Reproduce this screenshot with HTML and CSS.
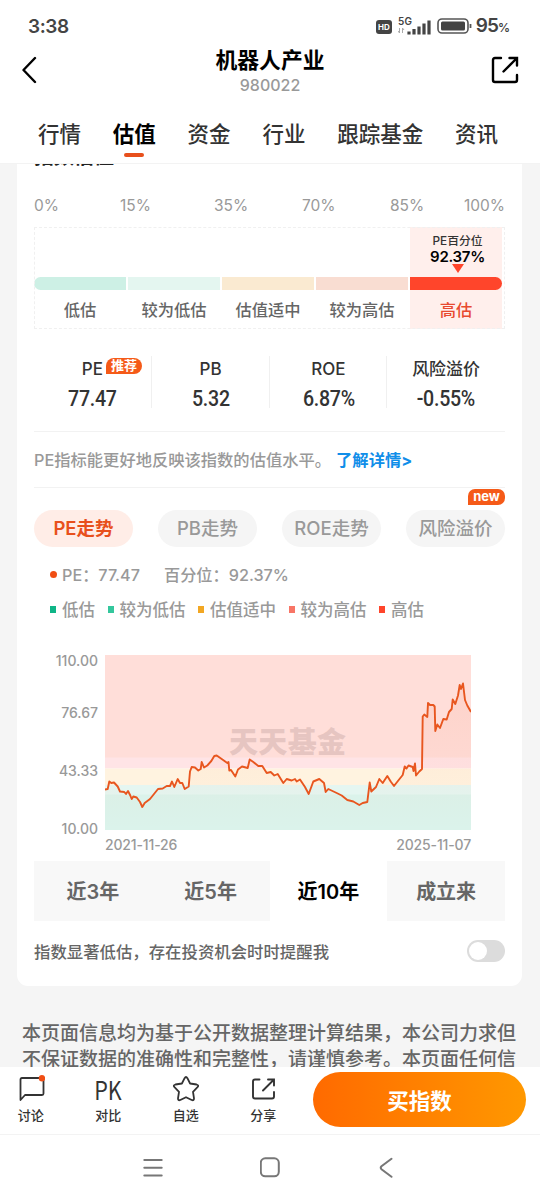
FILE: index.html
```
<!DOCTYPE html>
<html lang="zh-CN">
<head>
  <meta charset="UTF-8" />
  <meta name="viewport" content="width=device-width, initial-scale=1.0"/>
  <title>机器人产业 980022</title>
  <link rel="stylesheet" href="styles.css">
</head>
<body>
  <div class="status-bar">
    <span class="time">3:38</span>
    <div class="status-icons">
      <span class="hd">HD</span>
      <svg class="signal" width="34" height="20" viewBox="0 0 34 20">
        <text x="0" y="8" font-size="10" font-weight="600" textLength="14">5G</text>
        <path d="M1.500 16V11M0 14l1.500 2M4.500 11v5M4.500 11l1.500 2" stroke="#aaa" fill="none"/>
        <path d="M11 17.500v-3M16 17.500v-5.500M21 17.500v-8M26 17.500v-11M31 17.500v-14" stroke="#444" stroke-width="3.200" fill="none"/>
      </svg>
      <svg class="battery" width="36" height="17" viewBox="0 0 36 17">
        <rect x="1" y="1" width="30" height="14" rx="4" fill="none" stroke="#555" stroke-width="1.600"/>
        <rect x="4" y="3.500" width="24" height="9" rx="1.500" fill="#444"/>
        <path d="M33.500 6v4" stroke="#555" stroke-width="1.800"/>
      </svg>
      <span class="percent">95<small>%</small></span>
    </div>
  </div>

  <div class="header">
    <svg class="back" width="16" height="28" viewBox="0 0 16 28"><path d="M13 2L1.500 14 13 26" fill="none" stroke="#000" stroke-width="2.400" stroke-linecap="round" stroke-linejoin="round"/></svg>
    <div class="header-title">
      <h1>机器人产业</h1>
      <p>980022</p>
    </div>
    <svg class="share" width="28" height="28" viewBox="0 0 28 28"><path d="M10 2H4Q2 2 2 4v20q0 2 2 2h20q2 0 2-2v-5M12.500 15.500L25 3M18.500 2H26v7.500" fill="none" stroke="#000" stroke-width="2.400" stroke-linecap="round"/></svg>
  </div>

  <div class="tabs">
    <a>行情</a>
    <a class="active">估值</a>
    <a>资金</a>
    <a>行业</a>
    <a>跟踪基金</a>
    <a>资讯</a>
  </div>

  <div class="content">
    <div class="card">
      <h2>指数估值</h2>

      <div class="scale-labels">
        <span>0%</span><span>15%</span><span>35%</span><span>70%</span><span>85%</span><span>100%</span>
      </div>
      <div class="scale">
        <div class="level l1"><i></i><span>低估</span></div>
        <div class="level l2"><i></i><span>较为低估</span></div>
        <div class="level l3"><i></i><span>估值适中</span></div>
        <div class="level l4"><i></i><span>较为高估</span></div>
        <div class="level l5">
          <div class="mark"><small>PE百分位</small><b>92.37%</b></div>
          <i></i><span>高估</span>
        </div>
      </div>

      <div class="metrics">
        <div><p>PE<em class="tag">推荐</em></p><strong>77.47</strong></div>
        <div><p>PB</p><strong>5.32</strong></div>
        <div><p>ROE</p><strong>6.87%</strong></div>
        <div><p>风险溢价</p><strong>-0.55%</strong></div>
      </div>

      <div class="tip"><span>PE指标能更好地反映该指数的估值水平。</span><a>了解详情&gt;</a></div>

      <div class="pills">
        <button class="active">PE走势</button>
        <button>PB走势</button>
        <button>ROE走势</button>
        <button>风险溢价<em class="new">new</em></button>
      </div>

      <div class="reading"><i></i><span class="pe">PE：77.47</span><span class="pct">百分位：92.37%</span></div>
      <div class="legend">
        <span class="g1">低估</span><span class="g2">较为低估</span><span class="g3">估值适中</span><span class="g4">较为高估</span><span class="g5">高估</span>
      </div>

      <div class="chart">
        <div class="y-axis"><span>110.00</span><span>76.67</span><span>43.33</span><span>10.00</span></div>
        <svg width="366" height="175" viewBox="0 0 366 175">
          <defs>
            <linearGradient id="fade" x1="0" y1="0" x2="0" y2="1">
              <stop offset="0" stop-color="#e8501c" stop-opacity=".08"/>
              <stop offset="1" stop-color="#e8501c" stop-opacity="0"/>
            </linearGradient>
          </defs>
          <rect width="366" height="103" fill="#ffded9"/>
          <rect y="102.500" width="366" height="11" fill="#ffe4e6"/>
          <rect y="113.500" width="366" height="17" fill="#fff3e0"/>
          <rect y="130" width="366" height="10" fill="#e5f6f1"/>
          <rect y="139.500" width="366" height="35.500" fill="#dbf3eb"/>
          <text class="watermark" x="124" y="98" textLength="117">天天基金</text>
          <path id="area" fill="url(#fade)"/>
          <path id="line" fill="none" stroke="#e8561f" stroke-width="1.900" stroke-linejoin="round"/>
        </svg>
        <div class="x-axis"><span>2021-11-26</span><span>2025-11-07</span></div>
      </div>

      <div class="ranges">
        <button>近3年</button>
        <button>近5年</button>
        <button class="active">近10年</button>
        <button>成立来</button>
      </div>

      <div class="remind"><span>指数显著低估，存在投资机会时时提醒我</span><i class="switch"></i></div>
    </div>

    <p class="disclaimer">本页面信息均为基于公开数据整理计算结果，本公司力求但<br>不保证数据的准确性和完整性，请谨慎参考。本页面任何信</p>
  </div>

  <div class="footer">
    <div class="action">
      <svg width="28" height="28" viewBox="0 0 28 28"><path d="M3.500 25V4.500Q3.500 3 5 3h20q1.500 0 1.500 1.500v14q0 1.500-1.500 1.500H8z" fill="none" stroke="#333" stroke-width="1.800" stroke-linejoin="round"/><circle cx="25" cy="3.300" r="3.200" fill="#f04e14"/></svg>
      <span>讨论</span>
    </div>
    <div class="action">
      <b class="pk">PK</b>
      <span>对比</span>
    </div>
    <div class="action">
      <svg width="28" height="28" viewBox="0 0 28 28"><path d="M12.600 3.200q1.400-2.400 2.800 0l2.700 5.300 6.500 1q2.700.7.900 2.700l-4.500 4.600 1 6.500q.1 2.600-2.300 1.700L14 22.200 8.300 25q-2.400.9-2.300-1.700l1-6.500-4.500-4.600q-1.800-2 .9-2.700l6.500-1z" fill="none" stroke="#333" stroke-width="1.800" stroke-linejoin="round"/></svg>
      <span>自选</span>
    </div>
    <div class="action">
      <svg width="28" height="28" viewBox="0 0 28 28"><path d="M10.500 4.500H6Q4 4.500 4 6.500v15q0 2 2 2h17q2 0 2-2v-4.500M14 15.500L24.500 5M19 4.500h6v6" fill="none" stroke="#333" stroke-width="1.900" stroke-linecap="round"/></svg>
      <span>分享</span>
    </div>
    <button class="buy">买指数</button>
  </div>

  <div class="nav-bar">
    <svg width="20" height="20" viewBox="0 0 20 20"><path d="M1.300 2h17.400M1.300 9.800h17.400M1.300 17.500h17.400" stroke="#777" stroke-width="2" stroke-linecap="round"/></svg>
    <svg width="22" height="22" viewBox="0 0 22 22"><rect x=".8" y="1.300" width="18" height="18" rx="4.500" fill="none" stroke="#777" stroke-width="2"/></svg>
    <svg width="14" height="22" viewBox="0 0 14 22"><path d="M12.500 1.800L2.500 9.300q-1.500 1.500 0 3l10 7.500" fill="none" stroke="#777" stroke-width="2" stroke-linecap="round"/></svg>
  </div>

  <script>
    // PE curve, x/y inside the 366x175 plot
    const points = '0,134.500 2.700,134 4.300,126.500 6.300,128 9,127.500 12.700,131.500 15,136.500 19.300,137 21,139 23,136 25.300,140.500 26.700,144 28.300,141.500 31.700,142.500 35,147 37.300,152 39.700,148 45,144 49,139 53,134 57.700,133.500 61.700,131 65,131 67,126.500 69.300,132 72.700,124 75,128 77.300,128 79.700,134 83.700,131.500 85,116.500 86.700,112 90,112.500 93.300,115.500 95.700,114 96.700,107 99,112.500 102.300,110.500 106.300,106 109.300,101 111.700,100.500 116.700,104 122.300,108 123.500,107 124.300,115.500 126,115 130.300,121.500 133,114.500 137,111.500 142.700,113 144.700,104.500 148.300,107 153.300,111 157.300,111 161.700,118 165.700,117 169.300,120.500 172.700,119 178.300,128 181.700,124 186.700,125.500 190,124 191.700,126.500 195,124.500 200,132 203.700,139 208.300,126.500 214.300,124 219,128 220.700,137 223.300,134 231.700,138 236.700,140.500 242.300,145 248.300,146.500 254.300,150 257.700,148 262.300,147 264.700,127.500 266.300,136.500 271,132 274.300,124 277.700,128 282.300,121 285.700,126.500 289,131 293.300,125.500 297.700,120 299.700,111.500 301.500,113.500 303.500,110.500 307.700,112 308.500,116 310,108.500 311,120.500 314.300,116.500 317,114 317.700,61.500 319.300,59.500 322.300,62 323,48 325,50 328.300,50 329.700,51.500 330.300,76 332.300,69.500 335,73 338.300,64 341.700,64.500 344,57 346.700,54 347.700,44.500 350.300,49 353,40.500 354.700,30 356,34 358,28.500 360,45 362.300,50.500 366,57';
    document.getElementById('line').setAttribute('d', 'M' + points);
    document.getElementById('area').setAttribute('d', 'M' + points + ' V175 H0 Z');
  </script>
</body>
</html>
```
FILE: styles.css
```
* {
  box-sizing: border-box;
}
body {
  margin: 0;
  width: 540px;
  height: 1200px;
  overflow: hidden;
  display: flex;
  flex-direction: column;
  background: #fff;
  color: #333;
  font-family: Inter, "Noto Sans CJK SC", sans-serif;
  font-weight: 500;
}
h1, h2, p {
  margin: 0;
}
button {
  border: none;
  padding: 0;
  font-family: inherit;
}
em, i {
  font-style: normal;
}
svg {
  display: block;
  flex: none;
}
.status-bar {
  height: 46px;
  padding: 7px 30px 0 28px;
  display: flex;
  align-items: center;
  justify-content: space-between;
  color: #444;
}
.time {
  font-size: 19px;
  font-weight: 600;
  letter-spacing: -.4px;
}
.status-icons {
  display: flex;
  align-items: center;
}
.hd {
  width: 16px;
  height: 14px;
  border-radius: 3px;
  background: #444;
  color: #fff;
  font-size: 8px;
  font-weight: 700;
  line-height: 14px;
  text-align: center;
}
.signal {
  margin: 0 5px 0 6px;
  fill: #444;
}
.battery {
  margin-right: 3px;
}
.percent {
  font-size: 19px;
  font-weight: 600;
  line-height: 20px;
  letter-spacing: -1px;
}
.percent small {
  font-size: 12px;
  letter-spacing: 0;
}
.header {
  height: 56px;
  padding: 0 21px 0 22px;
  display: flex;
  justify-content: space-between;
}
.back {
  margin-top: 10px;
}
.share {
  margin-top: 10px;
}
.header-title {
  padding-left: 11px;
  text-align: center;
}
.header-title h1 {
  font-size: 21.8px;
  font-weight: 700;
  line-height: 28px;
  color: #000;
}
.header-title p {
  font-size: 16px;
  line-height: 22px;
  color: #999;
}
.tabs {
  height: 62px;
  padding: 17px 42px 0 38px;
  display: flex;
  justify-content: space-between;
  border-bottom: 1px solid #f3f3f3;
  font-size: 21.5px;
  line-height: 30px;
  white-space: nowrap;
}
.tabs .active {
  position: relative;
  color: #000;
  font-weight: 700;
}
.tabs .active::after {
  content: "";
  position: absolute;
  left: 11px;
  top: 34px;
  width: 20px;
  height: 4px;
  border-radius: 2px;
  background: #e8501c;
}
/* the page is scrolled a little, the card title sits mostly under the tabs */
.content {
  height: 903px;
  overflow: hidden;
  background: #f5f5f5;
}
.card {
  height: 842px;
  margin: -20px 18px 0 17px;
  padding: 0 17px;
  border-radius: 11px;
  background: #fff;
}
.card h2 {
  height: 26px;
  font-size: 20px;
  font-weight: 700;
  line-height: 26px;
  color: #222;
}
.scale-labels {
  height: 57px;
  padding-top: 25px;
  display: grid;
  grid-template-columns: 86px 94px 88px 88px 74px auto;
  font-size: 15.5px;
  font-weight: 400;
  line-height: 22px;
  color: #999;
}
.scale {
  height: 102px;
  padding-right: 3px;
  display: grid;
  grid-template-columns: repeat(5, 92px);
  justify-content: space-between;
  outline: 1px dashed #f0f0f0;
  outline-offset: -1px;
}
.level {
  display: flex;
  flex-direction: column;
  justify-content: flex-end;
  text-align: center;
  font-size: 16.3px;
  line-height: 40px;
  color: #666;
}
.level i {
  height: 13px;
}
.level span {
  height: 39px;
}
.l1 i {
  border-radius: 7px 0 0 7px;
  background: #cdf0e5;
}
.l2 i {
  background: #e4f6f0;
}
.l3 i {
  background: #faead1;
}
.l4 i {
  background: #f9ddd2;
}
.l5 {
  background: #ffefec;
  color: #e84a30;
}
.l5 i {
  border-radius: 0 7px 7px 0;
  background: #ff452b;
}
.mark {
  margin-bottom: 4px;
  padding-left: 3px;
  display: flex;
  flex-direction: column;
  align-items: center;
  color: #333;
}
.mark small {
  font-size: 11.8px;
  line-height: 15px;
}
.mark b {
  font-size: 15px;
  font-weight: 600;
  line-height: 15px;
  letter-spacing: -.3px;
  color: #000;
}
.mark::after {
  content: "";
  border: 6px solid transparent;
  border-top: 9px solid #ff452b;
  border-bottom: 0;
}
.metrics {
  height: 102px;
  padding-top: 27px;
  display: grid;
  grid-template-columns: repeat(4, 1fr);
  text-align: center;
}
.metrics div {
  height: 52px;
  margin-left: -1px;
  border-left: 1px solid #f0f0f0;
}
.metrics div:first-child {
  border-left: none;
}
.metrics p {
  position: relative;
  font-size: 17px;
  line-height: 27px;
}
.metrics strong {
  display: block;
  font-family: Roboto, sans-serif;
  font-size: 22px;
  font-weight: 500;
  line-height: 31px;
  letter-spacing: -.3px;
  transform: scaleX(.89);
}
.tag, .new {
  position: absolute;
  background: #f55a18;
  color: #fff;
  font-weight: 700;
  text-align: center;
}
.tag {
  left: 73px;
  top: 2px;
  width: 36px;
  height: 16px;
  border-radius: 8px 8px 8px 0;
  font-size: 13px;
  line-height: 15px;
}
.tip {
  height: 57px;
  padding-bottom: 2px;
  border: solid #f2f2f2;
  border-width: 1px 0;
  display: flex;
  align-items: center;
  font-size: 16.3px;
  color: #999;
  white-space: nowrap;
}
.tip a {
  margin-left: 5px;
  color: #108ee9;
  font-weight: 700;
}
.pills {
  padding-top: 22px;
  display: flex;
  justify-content: space-between;
}
.pills button {
  position: relative;
  width: 99px;
  height: 37px;
  border-radius: 19px;
  background: #f5f5f5;
  color: #999;
  font-size: 18.5px;
  font-weight: 500;
  line-height: 37px;
}
.pills .active {
  background: #ffede7;
  color: #e8501c;
  font-weight: 600;
}
.new {
  right: 0;
  top: -21px;
  width: 37px;
  height: 16px;
  border-radius: 7px 7px 7px 0;
  font-size: 13px;
  line-height: 15px;
}
.reading {
  height: 32px;
  margin-top: 11px;
  padding-left: 16px;
  display: flex;
  align-items: center;
  font-size: 16.2px;
  color: #999;
}
.reading i {
  width: 7px;
  height: 7px;
  margin-right: 5px;
  border-radius: 50%;
  background: #f04e14;
}
.reading .pe {
  width: 102px;
}
.legend {
  height: 38px;
  padding-left: 16px;
  display: flex;
  align-items: center;
  gap: 12.5px;
  font-size: 16.5px;
  color: #999;
}
.legend span {
  display: flex;
  align-items: center;
  gap: 6px;
}
.legend span::before {
  content: "";
  width: 6px;
  height: 7px;
  background: currentColor;
}
.legend .g1::before {
  background: #0fb587;
}
.legend .g2::before {
  background: #34c79d;
}
.legend .g3::before {
  background: #f2a723;
}
.legend .g4::before {
  background: #f87566;
}
.legend .g5::before {
  background: #ff452b;
}
.chart {
  margin-top: 27px;
  height: 206px;
  display: grid;
  grid-template-columns: 64px 366px;
  grid-template-rows: 175px 31px;
  column-gap: 7px;
  font-size: 14px;
  color: #999;
}
.y-axis {
  display: flex;
  flex-direction: column;
  align-items: flex-end;
  line-height: 16px;
}
.y-axis span {
  margin-bottom: 42px;
}
.y-axis span:first-child {
  margin: -2px 0 36px;
}
.x-axis {
  grid-column: 2;
  display: flex;
  justify-content: space-between;
  line-height: 29px;
  letter-spacing: -.15px;
}
.watermark {
  fill: #dfbfbb;
  fill-opacity: .8;
  font-family: "Noto Sans CJK SC", sans-serif;
  font-size: 29px;
  font-weight: 900;
}
.ranges {
  display: grid;
  grid-template-columns: repeat(4, 1fr);
}
.ranges button {
  height: 60px;
  padding-bottom: 1px;
  background: #f8f8f8;
  color: #666;
  font-size: 20px;
  font-weight: 600;
}
.ranges .active {
  background: #fff;
  color: #000;
}
.remind {
  height: 60px;
  display: flex;
  align-items: center;
  justify-content: space-between;
  font-size: 16.4px;
  color: #666;
}
.remind span {
  padding-bottom: 1px;
}
.switch {
  width: 38px;
  height: 22px;
  padding: 2px;
  border-radius: 12px;
  background: #dcdcdc;
}
.switch::before {
  content: "";
  display: block;
  width: 18px;
  height: 18px;
  border-radius: 50%;
  background: #fff;
}
.disclaimer {
  margin: 35px 0 0 22px;
  font-size: 19px;
  line-height: 26px;
  color: #666;
  white-space: nowrap;
}
.footer {
  height: 68px;
  padding-right: 14px;
  display: flex;
  border-bottom: 1px solid #f3f3f3;
}
.action {
  width: 77.5px;
  padding: 8px 16px 0 0;
  display: flex;
  flex-direction: column;
  align-items: center;
  font-size: 13px;
}
.action span {
  line-height: 24px;
}
.pk {
  height: 28px;
  font-family: "Noto Sans CJK SC", sans-serif;
  font-size: 25px;
  font-weight: 400;
  line-height: 28px;
  transform: scaleX(.86);
}
.buy {
  width: 213px;
  height: 55px;
  margin: 5px 0 0 auto;
  padding-bottom: 1px;
  border-radius: 28px;
  background: linear-gradient(90deg, #ff6a00, #ff9800);
  color: #fff;
  font-size: 21.5px;
  font-weight: 700;
}
.nav-bar {
  flex: 1;
  padding: 0 147px 0 143px;
  display: flex;
  align-items: center;
  justify-content: space-between;
}
```
